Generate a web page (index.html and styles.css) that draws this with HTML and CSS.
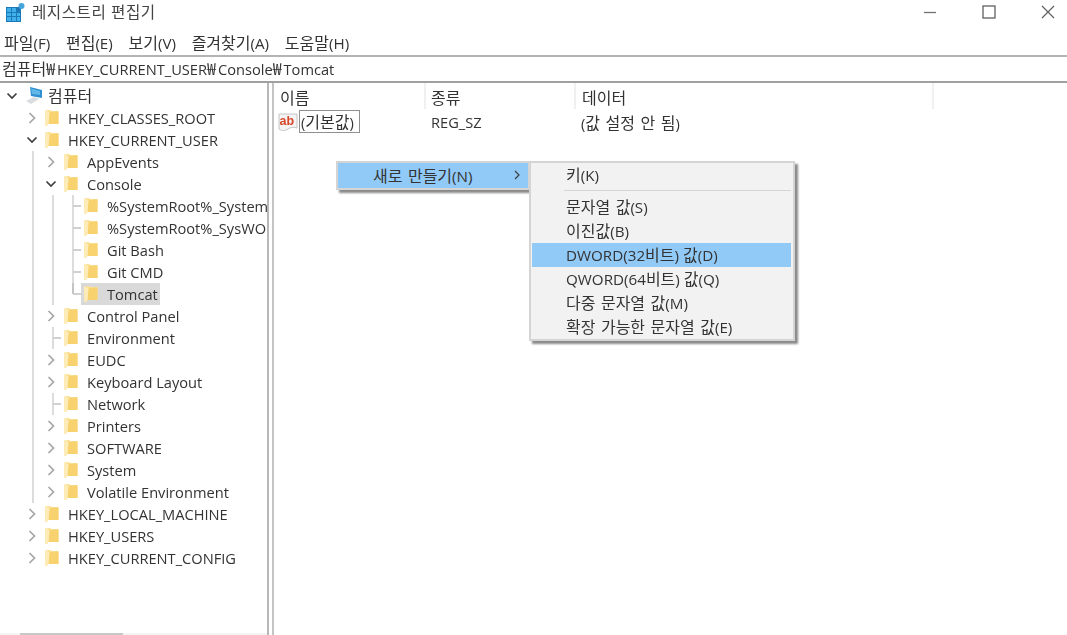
FILE: index.html
```html
<!DOCTYPE html>
<html lang="ko">
<head>
    <meta charset="UTF-8">
    <meta name="viewport" content="width=device-width, initial-scale=1.0">
    <title>레지스트리 편집기</title>
    <link rel="stylesheet" href="styles.css">
</head>
<body>
    <!-- Shared icons -->
    <svg class="defs" width="0" height="0">
        <symbol id="folder" viewBox="0 0 14 16">
            <path d="M0 0.5 L5 0 L6 1 L13.5 1 L13.5 14 L3 14 L2 16 L0.5 16 Z" fill="#fbe08f"/>
            <path d="M4.5 2 L13.5 1.5 L13.5 14 L3.5 14 Z" fill="#f7d26f"/>
            <path d="M0 0.5 L4.5 2 L3.5 14 L2 16 L0.5 16 Z" fill="#fdebb8"/>
        </symbol>
        <symbol id="open" viewBox="0 0 12 12">
            <path d="M1.5 3.5 L6 8 L10.5 3.5" fill="none" stroke="#404040" stroke-width="1.7"/>
        </symbol>
        <symbol id="closed" viewBox="0 0 12 12">
            <path d="M3.5 1 L8.5 6 L3.5 11" fill="none" stroke="#a6a6a6" stroke-width="1.7"/>
        </symbol>
    </svg>

    <div class="window">
        <div class="titlebar">
            <svg class="app-icon" width="20" height="20" viewBox="0 0 20 20">
                <rect x="0" y="5" width="15" height="15" fill="#1b79b8"/>
                <path d="M1 6h4v4H1zM6 6h4v4H6zM1 11h4v3H1zM6 11h4v3H6zM11 11h3v3h-3zM1 15h4v4H1zM6 15h4v4H6zM11 15h3v4h-3z" fill="#3fb0ea"/>
                <circle cx="15.5" cy="4" r="3" fill="#45a5dc"/>
            </svg>
            <span class="title">레지스트리 편집기</span>
            <div class="win-controls">
                <svg width="14" height="14" viewBox="0 0 14 14"><path d="M1 7.5h12" stroke="#707070" stroke-width="1.3"/></svg>
                <svg width="14" height="14" viewBox="0 0 14 14"><rect x="1" y="1" width="12" height="12" fill="none" stroke="#606060" stroke-width="1.3"/></svg>
                <svg width="14" height="14" viewBox="0 0 14 14"><path d="M1 1l12 12M13 1L1 13" stroke="#606060" stroke-width="1.2"/></svg>
            </div>
        </div>

        <div class="menubar">
            <span><span class="ko">파일</span>(F)</span>
            <span><span class="ko">편집</span>(E)</span>
            <span><span class="ko">보기</span>(V)</span>
            <span><span class="ko">즐겨찾기</span>(A)</span>
            <span><span class="ko">도움말</span>(H)</span>
        </div>

        <div class="address"><span class="ko">컴퓨터</span><span class="won">₩</span>HKEY_CURRENT_USER<span class="won">₩</span>Console<span class="won">₩</span>Tomcat</div>

        <div class="panes">
            <div class="tree-pane">
                <div class="tree">
                    <div class="row root">
                        <span class="slot"><svg class="chev"><use href="#open"/></svg></span>
                        <svg class="pc-icon" width="20" height="20" viewBox="0 0 20 20">
                            <path d="M5 1 L17 4 L17 12 L6 10 Z" fill="#2f8fd0"/>
                            <path d="M6 2.5 L15 5 L15 9 L7 8 Z" fill="#62b6e8"/>
                            <path d="M1 15 L9 11 L14 13 L6 18 Z" fill="#d9dde0"/>
                        </svg>
                        <span class="label ko root-label">컴퓨터</span>
                    </div>

                    <div class="row lv1">
                        <span class="slot"><svg class="chev"><use href="#closed"/></svg></span>
                        <svg class="folder"><use href="#folder"/></svg><span class="label">HKEY_CLASSES_ROOT</span>
                    </div>
                    <div class="row lv1">
                        <span class="slot"><svg class="chev"><use href="#open"/></svg></span>
                        <svg class="folder"><use href="#folder"/></svg><span class="label">HKEY_CURRENT_USER</span>
                    </div>

                    <div class="row lv1">
                        <span class="slot line"></span>
                        <span class="slot"><svg class="chev"><use href="#closed"/></svg></span>
                        <svg class="folder"><use href="#folder"/></svg><span class="label">AppEvents</span>
                    </div>
                    <div class="row lv1">
                        <span class="slot line"></span>
                        <span class="slot"><svg class="chev"><use href="#open"/></svg></span>
                        <svg class="folder"><use href="#folder"/></svg><span class="label">Console</span>
                    </div>

                    <div class="row lv1">
                        <span class="slot line"></span>
                        <span class="slot line"></span>
                        <span class="slot tee"></span>
                        <svg class="folder"><use href="#folder"/></svg><span class="label">%SystemRoot%_System</span>
                    </div>
                    <div class="row lv1">
                        <span class="slot line"></span>
                        <span class="slot line"></span>
                        <span class="slot tee"></span>
                        <svg class="folder"><use href="#folder"/></svg><span class="label">%SystemRoot%_SysWO</span>
                    </div>
                    <div class="row lv1">
                        <span class="slot line"></span>
                        <span class="slot line"></span>
                        <span class="slot tee"></span>
                        <svg class="folder"><use href="#folder"/></svg><span class="label">Git Bash</span>
                    </div>
                    <div class="row lv1">
                        <span class="slot line"></span>
                        <span class="slot line"></span>
                        <span class="slot tee"></span>
                        <svg class="folder"><use href="#folder"/></svg><span class="label">Git CMD</span>
                    </div>
                    <div class="row lv1">
                        <span class="slot line"></span>
                        <span class="slot line"></span>
                        <span class="slot end"></span>
                        <div class="selected">
                            <svg class="folder"><use href="#folder"/></svg><span class="label">Tomcat</span>
                        </div>
                    </div>

                    <div class="row lv1">
                        <span class="slot line"></span>
                        <span class="slot"><svg class="chev"><use href="#closed"/></svg></span>
                        <svg class="folder"><use href="#folder"/></svg><span class="label">Control Panel</span>
                    </div>
                    <div class="row lv1">
                        <span class="slot line"></span>
                        <span class="slot tee"></span>
                        <svg class="folder"><use href="#folder"/></svg><span class="label">Environment</span>
                    </div>
                    <div class="row lv1">
                        <span class="slot line"></span>
                        <span class="slot"><svg class="chev"><use href="#closed"/></svg></span>
                        <svg class="folder"><use href="#folder"/></svg><span class="label">EUDC</span>
                    </div>
                    <div class="row lv1">
                        <span class="slot line"></span>
                        <span class="slot"><svg class="chev"><use href="#closed"/></svg></span>
                        <svg class="folder"><use href="#folder"/></svg><span class="label">Keyboard Layout</span>
                    </div>
                    <div class="row lv1">
                        <span class="slot line"></span>
                        <span class="slot tee"></span>
                        <svg class="folder"><use href="#folder"/></svg><span class="label">Network</span>
                    </div>
                    <div class="row lv1">
                        <span class="slot line"></span>
                        <span class="slot"><svg class="chev"><use href="#closed"/></svg></span>
                        <svg class="folder"><use href="#folder"/></svg><span class="label">Printers</span>
                    </div>
                    <div class="row lv1">
                        <span class="slot line"></span>
                        <span class="slot"><svg class="chev"><use href="#closed"/></svg></span>
                        <svg class="folder"><use href="#folder"/></svg><span class="label">SOFTWARE</span>
                    </div>
                    <div class="row lv1">
                        <span class="slot line"></span>
                        <span class="slot"><svg class="chev"><use href="#closed"/></svg></span>
                        <svg class="folder"><use href="#folder"/></svg><span class="label">System</span>
                    </div>
                    <div class="row lv1">
                        <span class="slot line"></span>
                        <span class="slot"><svg class="chev"><use href="#closed"/></svg></span>
                        <svg class="folder"><use href="#folder"/></svg><span class="label">Volatile Environment</span>
                    </div>

                    <div class="row lv1">
                        <span class="slot"><svg class="chev"><use href="#closed"/></svg></span>
                        <svg class="folder"><use href="#folder"/></svg><span class="label">HKEY_LOCAL_MACHINE</span>
                    </div>
                    <div class="row lv1">
                        <span class="slot"><svg class="chev"><use href="#closed"/></svg></span>
                        <svg class="folder"><use href="#folder"/></svg><span class="label">HKEY_USERS</span>
                    </div>
                    <div class="row lv1">
                        <span class="slot"><svg class="chev"><use href="#closed"/></svg></span>
                        <svg class="folder"><use href="#folder"/></svg><span class="label">HKEY_CURRENT_CONFIG</span>
                    </div>
                </div>
                <div class="h-scroll"><div class="h-thumb"></div></div>
            </div>

            <div class="list-pane">
                <div class="list-head">
                    <div class="col col-name ko">이름</div>
                    <div class="col col-type ko">종류</div>
                    <div class="col col-data ko">데이터</div>
                </div>
                <div class="list-row">
                    <div class="cell-name">
                        <svg class="ab-icon" width="20" height="20" viewBox="0 0 20 20">
                            <path d="M1 2h18v14c-3 -1 -6 -1 -9 1c-3 2 -6 2 -9 0z" fill="#f4f4f4" stroke="#c4c4c4"/>
                            <text x="1.5" y="12.5" class="ab-text">ab</text>
                        </svg>
                        <span class="edit-box">(<span class="ko">기본값</span>)</span>
                    </div>
                    <div class="cell-type">REG_SZ</div>
                    <div class="cell-data">(<span class="ko">값 설정 안 됨</span>)</div>
                </div>
            </div>
        </div>
    </div>

    <!-- Context menus -->
    <div class="menu menu-new">
        <div class="menu-item active">
            <span><span class="ko">새로 만들기</span>(N)</span>
            <svg width="8" height="10" viewBox="0 0 8 10"><path d="M2 1l4 4-4 4" fill="none" stroke="#404040" stroke-width="1.2"/></svg>
        </div>
    </div>
    <div class="menu menu-sub">
        <div class="menu-item"><span><span class="ko">키</span>(K)</span></div>
        <div class="menu-sep"></div>
        <div class="menu-item"><span><span class="ko">문자열 값</span>(S)</span></div>
        <div class="menu-item"><span><span class="ko">이진값</span>(B)</span></div>
        <div class="menu-item active"><span>DWORD(32<span class="ko">비트</span>) <span class="ko">값</span>(D)</span></div>
        <div class="menu-item"><span>QWORD(64<span class="ko">비트</span>) <span class="ko">값</span>(Q)</span></div>
        <div class="menu-item"><span><span class="ko">다중 문자열 값</span>(M)</span></div>
        <div class="menu-item"><span><span class="ko">확장 가능한 문자열 값</span>(E)</span></div>
    </div>
</body>
</html>
```

FILE: styles.css
```css
/* General Styling */
body {
    margin: 0;
    padding: 0;
    overflow: hidden;
    background: white;
    color: #333;
    font-family: "Open Sans", "Noto Sans CJK KR", sans-serif;
    font-size: 14.65px;
    filter: blur(0.45px);
}

/* Hangul runs sit a little larger than the Latin text around them */
.ko {
    font-family: "Noto Sans CJK KR", sans-serif;
    font-size: 16px;
    word-spacing: 1px;
}

.won {
    font-family: "Noto Sans CJK KR", sans-serif;
    font-size: 16px;
    letter-spacing: 2px;
}

.defs {
    position: absolute;
}

.window {
    display: flex;
    flex-direction: column;
    width: 1067px;
    height: 635px;
}

/* Title bar */
.titlebar {
    display: flex;
    align-items: center;
    height: 28px;
    padding-left: 6px;
    padding-bottom: 6px;
    box-sizing: border-box;
    flex: none;
}

.app-icon {
    margin-right: 6px;
    margin-top: 2px;
}

.title {
    font-family: "Noto Sans CJK KR", sans-serif;
    font-size: 15.6px;
    letter-spacing: 0.5px;
    color: #444;
}

.win-controls {
    display: flex;
    gap: 45px;
    margin-left: auto;
    margin-right: 12px;
    margin-top: 2px;
}

/* Menu bar */
.menubar {
    display: flex;
    gap: 15.7px;
    height: 29px;
    line-height: 28px;
    padding-left: 4px;
    flex: none;
    font-size: 15.2px;
    border-bottom: 2px solid #b4b4b4;
    box-sizing: border-box;
}

/* Address bar */
.address {
    height: 26px;
    line-height: 23px;
    padding-left: 2px;
    flex: none;
    border-bottom: 2px solid #a0a0a0;
    box-sizing: border-box;
}

/* Panes */
.panes {
    display: flex;
    flex: 1;
    min-height: 0;
}

.tree-pane {
    display: flex;
    flex-direction: column;
    width: 267px;
    flex: none;
    border-right: 2px solid #b8b8b8;
    box-sizing: content-box;
}

.tree {
    flex: 1;
    padding-top: 2px;
    overflow: hidden;
}

.h-scroll {
    height: 2px;
    flex: none;
    background: #f4f4f4;
}

.h-thumb {
    width: 103px;
    height: 2px;
    margin-left: 20px;
    background: #c8c8c8;
}

.row {
    display: flex;
    align-items: center;
    height: 22px;
    white-space: nowrap;
}

.row.root {
    padding-left: 2px;
}

.row.lv1 {
    padding-left: 22px;
}

.label {
    padding-bottom: 1px;
}

.root-label {
    padding-bottom: 3px;
}

.slot {
    position: relative;
    display: flex;
    align-items: center;
    justify-content: center;
    width: 20px;
    height: 22px;
    flex: none;
}

.slot.line:first-child {
    width: 19px;
}

.slot.line::before,
.slot.tee::before {
    content: "";
    position: absolute;
    left: 11px;
    top: 0;
    bottom: 0;
    border-left: 2px solid #dcdcdc;
}

.slot.line:first-child::before {
    left: 10px;
}

.slot.end::before {
    content: "";
    position: absolute;
    left: 11px;
    top: 0;
    height: 11px;
    border-left: 2px solid #c4c4c4;
}

.slot.tee::after,
.slot.end::after {
    content: "";
    position: absolute;
    left: 12px;
    top: 10px;
    width: 8px;
    border-top: 2px solid #d0d0d0;
}

.chev {
    width: 12px;
    height: 12px;
}

.folder {
    width: 14px;
    height: 16px;
    margin-left: 3px;
    margin-right: 9px;
    flex: none;
}

.pc-icon {
    margin-left: 3px;
    margin-right: 3px;
    flex: none;
}

.selected {
    display: flex;
    align-items: center;
    height: 22px;
    padding-right: 2px;
    background: #d9d9d9;
}

/* Value list */
.list-pane {
    flex: 1;
    margin-left: 3px;
    border-left: 2px solid #c4c4c4;
}

.list-head {
    display: flex;
    height: 26px;
    line-height: 29px;
}

.col {
    padding-left: 6px;
    box-sizing: border-box;
    border-right: 2px solid #f0f0f0;
}

.col-name {
    width: 152px;
}

.col-type {
    width: 150px;
    padding-left: 5px;
}

.col-data {
    width: 358px;
}

.list-row {
    display: flex;
    align-items: center;
    height: 25px;
}

.cell-name {
    display: flex;
    align-items: center;
    width: 151px;
    padding-left: 4px;
    box-sizing: border-box;
}

.ab-text {
    font-family: "Liberation Sans", sans-serif;
    font-size: 12.5px;
    font-weight: bold;
    fill: #d9472b;
}

.edit-box {
    height: 23px;
    line-height: 21px;
    margin-left: 1px;
    padding: 0 5px 0 1px;
    border: 1px solid #8f8f8f;
    box-sizing: border-box;
}

.cell-type {
    width: 150px;
    padding-left: 6px;
    box-sizing: border-box;
}

.cell-data {
    padding-left: 6px;
}

/* Context menus */
.menu {
    position: absolute;
    box-sizing: border-box;
    background: #f2f2f2;
    border: 2px solid #d4d4d4;
    box-shadow: 3px 3px 2px #8a8a8a;
    font-size: 15.2px;
}

.menu-new {
    left: 336px;
    top: 161px;
    width: 194px;
    height: 29px;
}

.menu-sub {
    left: 529px;
    top: 161px;
    width: 266px;
    height: 180px;
    padding: 0 2px 0 1px;
}

.menu-item {
    display: flex;
    align-items: center;
    height: 24px;
    padding-left: 34px;
    padding-bottom: 2px;
    box-sizing: border-box;
}

.menu-new .menu-item {
    justify-content: space-between;
    height: 25px;
    padding-left: 35px;
    padding-right: 7px;
}

.menu-item.active {
    background: #91c9f7;
}

.menu-sep {
    height: 1px;
    margin: 3px 0 4px 32px;
    background: #d4d4d4;
}
```
